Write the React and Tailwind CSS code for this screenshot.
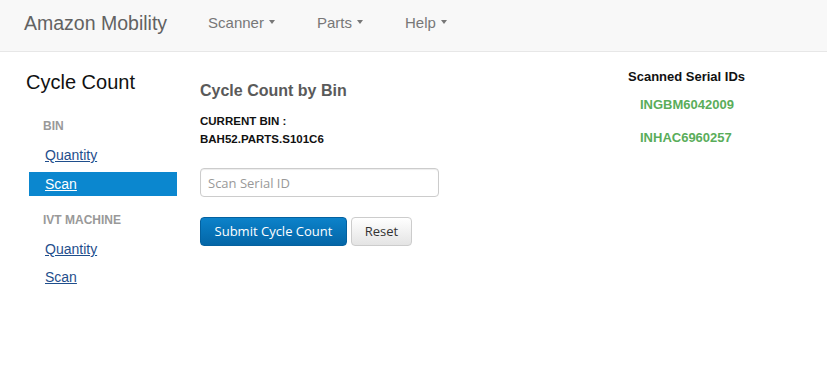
import React from "react";

const Caret = () => (
  <span className="inline-block ml-[5px] w-0 h-0 border-l-[3.5px] border-r-[3.5px] border-t-[4px] border-l-transparent border-r-transparent border-t-[#777] align-middle mb-[2px]" />
);

const NavItem = ({ label }) => (
  <a href="#" className="flex items-center text-[15px] leading-[20px] text-[#777]">
    {label}
    <Caret />
  </a>
);

const SideLink = ({ label, active }) => (
  <a
    href="#"
    className={`${
      active ? "bg-[#0b87cf] text-white" : "text-[#1f4e8c]"
    } block h-[24px] pl-[16px] text-[14px] leading-[24px] underline`}
  >
    {label}
  </a>
);

const App = () => {
  return (
    <div className="min-h-screen bg-white font-['Liberation_Sans',Arial,sans-serif]">
      {/* Navbar */}
      <header className="h-[52px] bg-[#f8f8f8] border-b border-[#e7e7e7] flex items-start">
        <a href="#" className="ml-[24px] mt-[13px] text-[19.5px] leading-[20px] text-[#626262]">
          Amazon Mobility
        </a>
        <nav className="ml-[41px] mt-[13px] flex gap-[42px]">
          <NavItem label="Scanner" />
          <NavItem label="Parts" />
          <NavItem label="Help" />
        </nav>
      </header>

      <div className="flex pl-[26px]">
        {/* Sidebar */}
        <aside className="w-[174px] pt-[18px]">
          <h3 className="text-[20px] leading-[24px] text-[#111]">Cycle Count</h3>
          <div className="ml-[3px] w-[148px] mt-[24px]">
            <div className="pl-[14px] text-[12px] leading-[16px] font-bold text-[#999]">BIN</div>
            <div className="mt-[9px] flex flex-col gap-[5px]">
              <SideLink label="Quantity" />
              <SideLink label="Scan" active />
            </div>
            <div className="mt-[16px] pl-[14px] text-[12px] leading-[16px] font-bold text-[#999]">
              IVT MACHINE
            </div>
            <div className="mt-[9px] flex flex-col gap-[4px]">
              <SideLink label="Quantity" />
              <SideLink label="Scan" />
            </div>
          </div>
        </aside>

        {/* Main */}
        <main className="w-[428px] pt-[29px]">
          <h4 className="text-[16px] leading-[20px] font-bold text-[#5a5a5a]">Cycle Count by Bin</h4>
          <div className="mt-[11px] text-[11.5px] leading-[18px] font-bold text-[#111]">
            <div>CURRENT BIN :</div>
            <div>BAH52.PARTS.S101C6</div>
          </div>
          <input
            type="text"
            placeholder="Scan Serial ID"
            className="mt-[20px] block w-[239px] h-[29px] px-[7px] border border-[#ccc] rounded-[4px] shadow-[inset_0_1px_1px_rgba(0,0,0,0.075)] font-['Open_Sans',sans-serif] text-[13px] text-[#555] placeholder:text-[#999] outline-none"
          />
          <div className="mt-[20px] flex font-['Open_Sans',sans-serif] text-[13px]">
            <button className="w-[147px] h-[29px] rounded-[4px] border border-[#04619f] bg-gradient-to-b from-[#0c82ca] to-[#0466a7] text-white">
              Submit Cycle Count
            </button>
            <button className="ml-[4px] w-[61px] h-[29px] rounded-[4px] border border-[#ccc] bg-gradient-to-b from-white to-[#e4e4e4] text-[#333]">
              Reset
            </button>
          </div>
        </main>

        {/* Scanned list */}
        <section className="flex-1 pt-[16px]">
          <h5 className="text-[13px] leading-[18px] font-bold text-[#111]">Scanned Serial IDs</h5>
          <ul className="ml-[12px] mt-[10px] flex flex-col gap-[15px] text-[13px] leading-[18px] font-bold text-[#5aad5a]">
            <li>INGBM6042009</li>
            <li>INHAC6960257</li>
          </ul>
        </section>
      </div>
    </div>
  );
};

export default App;
